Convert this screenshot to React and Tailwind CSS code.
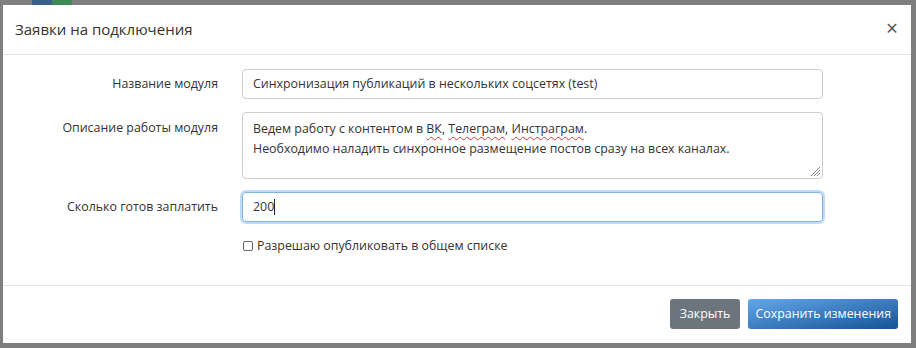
import React from 'react';

const font = { fontFamily: '"Open Sans", "Noto Sans", sans-serif' };

const Label = ({ children, top }) => (
  <div className={`w-[200px] shrink-0 text-right text-[12.4px] text-[#333] ${top ? 'pt-[7px]' : 'self-center'}`}>
    {children}
  </div>
);

const Wavy = ({ children }) => (
  <span className="underline decoration-wavy decoration-[#d33] decoration-1 underline-offset-[3px]">{children}</span>
);

const App = () => {
  return (
    <div className="w-[916px] h-[348px] bg-[#7f7f7f] relative overflow-hidden" style={font}>
      {/* page bits peeking above the modal */}
      <div className="absolute top-0 left-[32px] flex">
        <div className="w-[20px] h-[5px] bg-[#3a5f8c]" />
        <div className="w-[20px] h-[5px] bg-[#3d8a55]" />
      </div>

      <div className="absolute left-[3px] top-[5px] w-[908px] h-[338px] bg-white flex flex-col">
        {/* Header */}
        <div className="h-[50px] flex items-center justify-between px-[12px] border-b border-[#e5e5e5]">
          <div className="text-[15px] text-[#333]">Заявки на подключения</div>
          <button className="text-[#555] text-[21px] leading-none mr-[1px] -mt-[2px]">×</button>
        </div>

        {/* Body */}
        <div className="flex-1 pt-[14px] pl-[15px] flex flex-col gap-[13px] border-b border-[#e5e5e5]">
          <div className="flex gap-[24px]">
            <Label>Название модуля</Label>
            <div className="w-[581px] h-[30px] border border-[#ccc] rounded-[4px] flex items-center px-[10px] text-[12.4px] text-[#333]">
              Синхронизация публикаций в нескольких соцсетях (test)
            </div>
          </div>

          <div className="flex gap-[24px]">
            <Label top>Описание работы модуля</Label>
            <div className="relative w-[581px] h-[67px] border border-[#ccc] rounded-[4px] px-[10px] pt-[6px] text-[12.4px] leading-[20px] text-[#333]">
              <div>
                Ведем работу с контентом в <Wavy>ВК</Wavy>, <Wavy>Телеграм</Wavy>, <Wavy>Инстраграм</Wavy>.
              </div>
              <div>Необходимо наладить синхронное размещение постов сразу на всех каналах.</div>
              <svg className="absolute right-[1px] bottom-[1px]" width="12" height="12" viewBox="0 0 12 12">
                <path d="M11 2L2 11M11 5L5 11M11 8L8 11" stroke="#888" strokeWidth="1" />
              </svg>
            </div>
          </div>

          <div className="flex gap-[24px]">
            <Label>Сколько готов заплатить</Label>
            <div className="w-[581px] h-[30px] border border-[#7db3e8] rounded-[4px] shadow-[0_0_0_2px_rgba(140,190,240,0.55)] flex items-center px-[10px] text-[12.4px] text-[#333]">
              200<span className="w-px h-[16px] bg-[#222]" />
            </div>
          </div>

          <div className="flex items-center pl-[225px] mt-[2px] text-[12.4px] text-[#333]">
            <span className="w-[10px] h-[10px] border border-[#666] rounded-[2px] mr-[4px]" />
            Разрешаю опубликовать в общем списке
          </div>
        </div>

        {/* Footer */}
        <div className="h-[57px] flex items-center justify-end gap-[8px] pr-[13px] pb-[1px]">
          <button className="h-[30px] px-[10px] rounded-[3px] bg-[#6c757d] text-white text-[12.4px]">Закрыть</button>
          <button className="h-[30px] px-[7px] rounded-[3px] bg-gradient-to-br from-[#62a8ea] to-[#155397] text-white text-[12.4px]">
            Сохранить изменения
          </button>
        </div>
      </div>
    </div>
  );
};

export default App;
